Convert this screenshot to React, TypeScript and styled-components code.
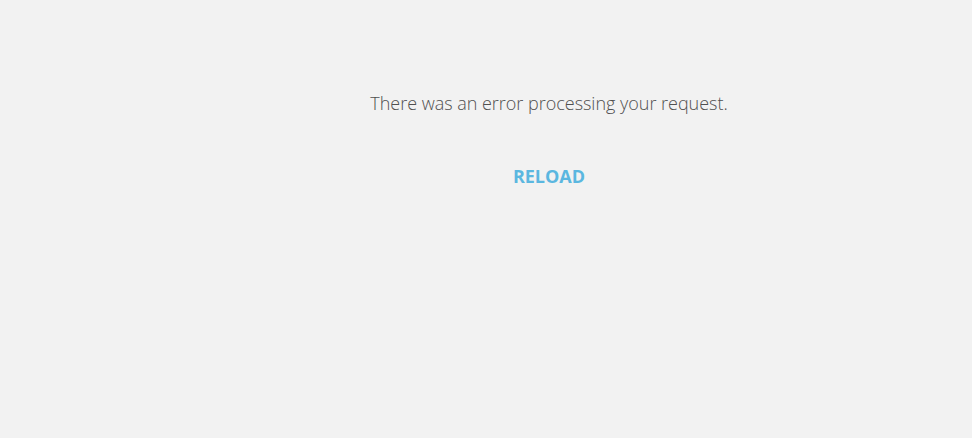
import React from 'react';
import styled, { createGlobalStyle } from 'styled-components';

const GlobalStyle = createGlobalStyle`
  html, body {
    margin: 0;
    padding: 0;
    background-color: #f2f2f2;
    font-family: "Open Sans", "Liberation Sans", sans-serif;
  }
`;

const Page = styled.div`
  display: flex;
  min-height: 438px;
  padding-left: 126px;
  box-sizing: border-box;
`;

const ErrorPanel = styled.div`
  flex: 1;
  display: flex;
  flex-direction: column;
  align-items: center;
  padding-top: 89px;
`;

const Message = styled.p`
  margin: 0;
  font-size: 18px;
  font-weight: 300;
  color: #505050;
  line-height: 28px;
  letter-spacing: -0.02px;
`;

const ReloadButton = styled.button`
  margin-top: 47px;
  background: none;
  border: none;
  padding: 0;
  font-family: inherit;
  font-size: 18px;
  font-weight: 700;
  color: #5bb7e0;
  line-height: 24px;
  cursor: pointer;
`;

const App: React.FC = () => {
  return (
    <>
      <GlobalStyle />
      <Page>
        <ErrorPanel>
          <Message>There was an error processing your request.</Message>
          <ReloadButton onClick={() => window.location.reload()}>RELOAD</ReloadButton>
        </ErrorPanel>
      </Page>
    </>
  );
};

export default App;
